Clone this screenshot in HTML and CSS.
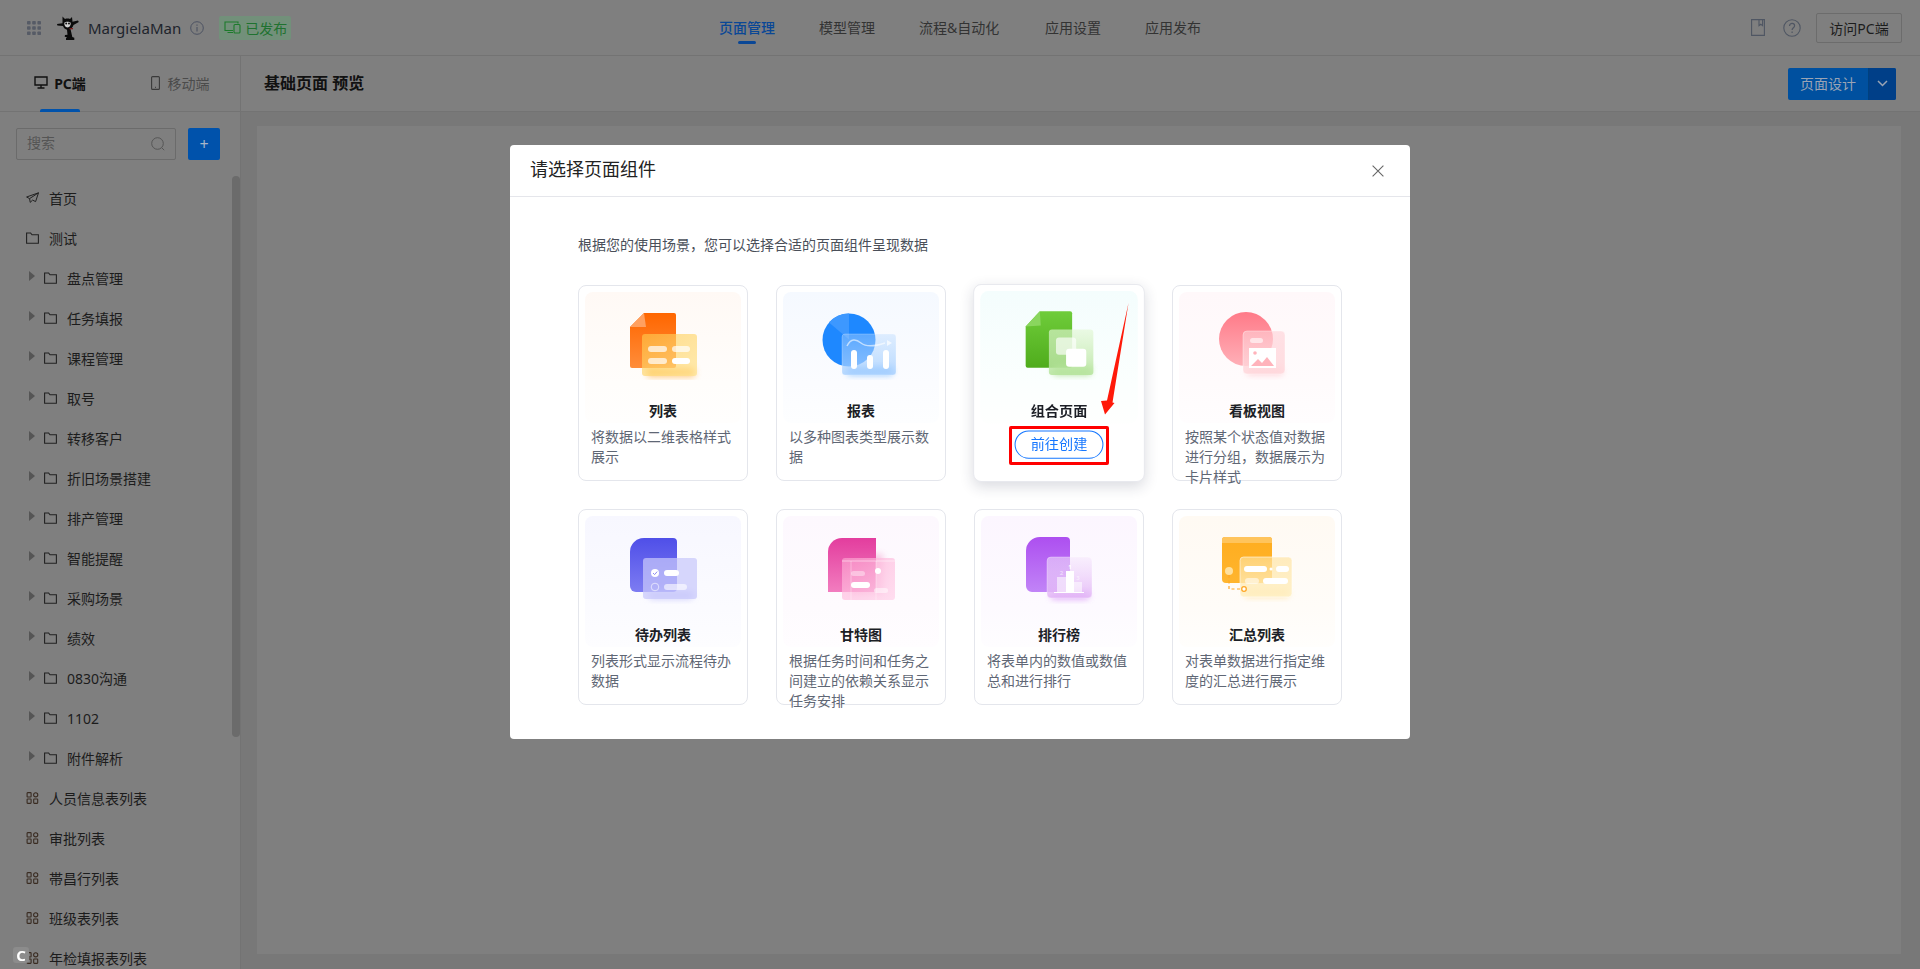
FILE: index.html
```html
<!DOCTYPE html>
<html lang="zh-CN">
<head>
<meta charset="utf-8">
<title>基础页面 预览</title>
<link rel="stylesheet" href="styles.css">
</head>
<body>
<svg class="defs" aria-hidden="true">
  <defs>
    <filter id="soft" x="-40%" y="-60%" width="180%" height="220%"><feGaussianBlur stdDeviation="3"/></filter>
    <symbol id="folder" viewBox="0 0 13 12"><path d="M.6 1h4l1.4 1.8h6.4v8.4H.6z" fill="none" stroke="#222" stroke-width="1.1"/></symbol>
    <symbol id="apps" viewBox="0 0 12 12"><g fill="none" stroke="#3a2c22" stroke-width="1.1"><rect x=".6" y=".6" width="4" height="4.4" rx=".6"/><rect x=".6" y="7" width="4" height="4.4" rx=".6"/><rect x="7.2" y="7" width="4" height="4.4" rx=".6"/><circle cx="9.2" cy="2.8" r="2.1"/></g></symbol>
    <linearGradient id="gOrange" x1="0" y1="0" x2="0" y2="1"><stop offset="0" stop-color="#ff6600"/><stop offset="1" stop-color="#ff8d3a"/></linearGradient>
    <linearGradient id="gYellow" x1="0" y1="0" x2="1" y2="1"><stop offset="0" stop-color="#ffc94a" stop-opacity=".62"/><stop offset="1" stop-color="#ffe28a" stop-opacity=".68"/></linearGradient>
    <linearGradient id="gBlueF" x1="0" y1="0" x2="0" y2="1"><stop offset="0" stop-color="#b6d8ff" stop-opacity=".4"/><stop offset="1" stop-color="#a5cfff" stop-opacity=".8"/></linearGradient>
    <linearGradient id="gGreen" x1="0" y1="0" x2="0" y2="1"><stop offset="0" stop-color="#6fcc3a"/><stop offset="1" stop-color="#4fac1c"/></linearGradient>
    <linearGradient id="gGreenF" x1="0" y1="0" x2="0" y2="1"><stop offset="0" stop-color="#e3f7d6" stop-opacity=".65"/><stop offset="1" stop-color="#b4e39a" stop-opacity=".85"/></linearGradient>
    <linearGradient id="gRed" x1="0" y1="0" x2="0" y2="1"><stop offset="0" stop-color="#ff7a88"/><stop offset="1" stop-color="#ffb0b8"/></linearGradient>
    <linearGradient id="gRedF" x1="0" y1="0" x2="0" y2="1"><stop offset="0" stop-color="#ffd0d6" stop-opacity=".6"/><stop offset="1" stop-color="#ffd8dc" stop-opacity=".85"/></linearGradient>
    <linearGradient id="gIndigo" x1="0" y1="0" x2="0" y2="1"><stop offset="0" stop-color="#4f4fe8"/><stop offset="1" stop-color="#7d7cf2"/></linearGradient>
    <linearGradient id="gPink" x1="0" y1="0" x2="0" y2="1"><stop offset="0" stop-color="#e33d9e"/><stop offset="1" stop-color="#f27dbf"/></linearGradient>
    <linearGradient id="gPinkF" x1="0" y1="0" x2="1" y2="1"><stop offset="0" stop-color="#ffa9d3" stop-opacity=".6"/><stop offset="1" stop-color="#ffd6ec" stop-opacity=".8"/></linearGradient>
    <linearGradient id="gPurple" x1="0" y1="0" x2="0" y2="1"><stop offset="0" stop-color="#ad4ff0"/><stop offset="1" stop-color="#c184f7"/></linearGradient>
    <linearGradient id="gPurpleF" x1="0" y1="0" x2="0" y2="1"><stop offset="0" stop-color="#f5e6fc" stop-opacity=".55"/><stop offset="1" stop-color="#e2b4f6" stop-opacity=".85"/></linearGradient>
    <linearGradient id="gAmber" x1="0" y1="0" x2="0" y2="1"><stop offset="0" stop-color="#ffad1f"/><stop offset="1" stop-color="#ffb52e"/></linearGradient>
    <linearGradient id="gAmberF" x1="0" y1="0" x2="0" y2="1"><stop offset="0" stop-color="#ffe3a0" stop-opacity=".65"/><stop offset="1" stop-color="#fff0c4" stop-opacity=".85"/></linearGradient>
  </defs>
</svg>

<div class="app">
  <header class="topbar">
    <div class="brand">
      <svg class="grid-icon" viewBox="0 0 14 14"><g fill="#565b66"><rect x="0" y="0" width="3.6" height="3.6" rx=".8"/><rect x="5.2" y="0" width="3.6" height="3.6" rx=".8"/><rect x="10.4" y="0" width="3.6" height="3.6" rx=".8"/><rect x="0" y="5.2" width="3.6" height="3.6" rx=".8"/><rect x="5.2" y="5.2" width="3.6" height="3.6" rx=".8"/><rect x="10.4" y="5.2" width="3.6" height="3.6" rx=".8"/><rect x="0" y="10.4" width="3.6" height="3.6" rx=".8"/><rect x="5.2" y="10.4" width="3.6" height="3.6" rx=".8"/><rect x="10.4" y="10.4" width="3.6" height="3.6" rx=".8"/></g></svg>
      <svg class="logo" viewBox="0 0 22 24"><path d="M5.500 .5L8 3c1.800-.6 3.600-.6 5 0L15 1l.5 4.800L21 4.500l.8 1.400-5.300 3C15.800 11 14.600 12.300 13.500 13l.8 3.500 1 4.500 2 .8V24H9v-1.800l1-1-2.300-.4.300-1.700 2.500-.4-.5-5C7.500 13 6.500 11.500 6 10L.4 9.500 0 8l5.500-.8z" fill="#0a0a0a"/><path d="M7.500 6.500c1.200-1 4.800-1 6 0 .7 2-.8 5-3 5s-3.700-3-3-5z" fill="#d0d0d0"/><circle cx="9.200" cy="7.400" r="1" fill="#111"/><circle cx="12" cy="7.400" r="1" fill="#111"/><rect x="12.500" y="12" width="3.500" height="1.300" fill="#7a1f1f"/></svg>
      <span class="brand-name">MargielaMan</span>
      <svg class="info-icon" viewBox="0 0 14 14"><circle cx="7" cy="7" r="6.300" fill="none" stroke="#4c5262" stroke-width="1"/><path d="M7 6v4.500M7 3.500v1.200" stroke="#4c5262" stroke-width="1.100"/></svg>
      <span class="status-tag">
        <svg class="status-icon" viewBox="0 0 17 13"><path d="M14 2.500V1H1v8.500h8M3.500 11.500H9" fill="none" stroke="#1c7a2b" stroke-width="1.100"/><rect x="10" y="3.500" width="6" height="8.500" rx="1" fill="none" stroke="#1c7a2b" stroke-width="1.100"/></svg>
        已发布
      </span>
    </div>
    <nav class="main-nav">
      <a class="nav-link is-active">页面管理</a>
      <a class="nav-link">模型管理</a>
      <a class="nav-link is-wide">流程&amp;自动化</a>
      <a class="nav-link">应用设置</a>
      <a class="nav-link">应用发布</a>
    </nav>
    <div class="top-actions">
      <svg class="book-icon" viewBox="0 0 14 17"><path d="M.6.6h12.800v15.800H.6zM8 .6v6l1.800-1.400L11.600 6.600V.6" fill="none" stroke="#4f5663" stroke-width="1.100"/></svg>
      <svg class="help-icon" viewBox="0 0 18 18"><circle cx="9" cy="9" r="8.200" fill="none" stroke="#4f5663" stroke-width="1.100"/><path d="M6.500 7c0-1.600 1.100-2.600 2.600-2.600S11.600 5.400 11.600 6.800c0 2-2.500 2-2.500 4.200M9.100 12.500v1.400" fill="none" stroke="#4f5663" stroke-width="1.200"/></svg>
      <button class="visit-btn">访问PC端</button>
    </div>
  </header>

  <div class="workspace">
    <aside class="sidebar">
      <div class="side-tabs">
        <div class="side-tab is-active">
          <svg class="tab-icon-pc" viewBox="0 0 14 13"><path d="M1 1h12v8H1zM7 9v3M3.500 12h7" fill="none" stroke="#111" stroke-width="1.400"/></svg>
          <span>PC端</span>
        </div>
        <div class="side-tab">
          <svg class="tab-icon-phone" viewBox="0 0 9 14"><rect x=".6" y=".6" width="7.800" height="12.800" rx="1" fill="none" stroke="#3a3a3a" stroke-width="1.100"/><path d="M4 11.300h1" stroke="#3a3a3a"/></svg>
          <span>移动端</span>
        </div>
      </div>
      <div class="search-row">
        <div class="search-box">
          <span class="search-text">搜索</span>
          <svg class="search-icon" viewBox="0 0 14 14"><circle cx="6.500" cy="6.500" r="5.800" fill="none" stroke="#555" stroke-width="1"/><path d="M10.800 10.800l2.400 2.400" stroke="#555"/></svg>
        </div>
        <button class="add-btn">+</button>
      </div>
      <ul class="tree">
        <li class="tree-row"><svg class="tree-icon" viewBox="0 0 13 12"><path d="M12.500.8L.6 5l3 1.600.6 3.800 2.400-2.300 3 1.500zM3.600 6.600l8.900-5.800" fill="none" stroke="#222" stroke-width="1"/></svg>首页</li>
        <li class="tree-row"><svg class="tree-icon"><use href="#folder"/></svg>测试</li>
        <li class="tree-row is-nested"><i class="caret"></i><svg class="tree-icon"><use href="#folder"/></svg>盘点管理</li>
        <li class="tree-row is-nested"><i class="caret"></i><svg class="tree-icon"><use href="#folder"/></svg>任务填报</li>
        <li class="tree-row is-nested"><i class="caret"></i><svg class="tree-icon"><use href="#folder"/></svg>课程管理</li>
        <li class="tree-row is-nested"><i class="caret"></i><svg class="tree-icon"><use href="#folder"/></svg>取号</li>
        <li class="tree-row is-nested"><i class="caret"></i><svg class="tree-icon"><use href="#folder"/></svg>转移客户</li>
        <li class="tree-row is-nested"><i class="caret"></i><svg class="tree-icon"><use href="#folder"/></svg>折旧场景搭建</li>
        <li class="tree-row is-nested"><i class="caret"></i><svg class="tree-icon"><use href="#folder"/></svg>排产管理</li>
        <li class="tree-row is-nested"><i class="caret"></i><svg class="tree-icon"><use href="#folder"/></svg>智能提醒</li>
        <li class="tree-row is-nested"><i class="caret"></i><svg class="tree-icon"><use href="#folder"/></svg>采购场景</li>
        <li class="tree-row is-nested"><i class="caret"></i><svg class="tree-icon"><use href="#folder"/></svg>绩效</li>
        <li class="tree-row is-nested"><i class="caret"></i><svg class="tree-icon"><use href="#folder"/></svg>0830沟通</li>
        <li class="tree-row is-nested"><i class="caret"></i><svg class="tree-icon"><use href="#folder"/></svg>1102</li>
        <li class="tree-row is-nested"><i class="caret"></i><svg class="tree-icon"><use href="#folder"/></svg>附件解析</li>
        <li class="tree-row"><svg class="tree-icon"><use href="#apps"/></svg>人员信息表列表</li>
        <li class="tree-row"><svg class="tree-icon"><use href="#apps"/></svg>审批列表</li>
        <li class="tree-row"><svg class="tree-icon"><use href="#apps"/></svg>帯昌行列表</li>
        <li class="tree-row"><svg class="tree-icon"><use href="#apps"/></svg>班级表列表</li>
        <li class="tree-row"><svg class="tree-icon"><use href="#apps"/></svg>年检填报表列表</li>
      </ul>
      <div class="side-scroll"></div>
    </aside>
    <main class="content">
      <div class="content-head">
        <h1 class="content-title">基础页面 预览</h1>
        <div class="split-btn">
          <span class="split-main">页面设计</span>
          <span class="split-arrow"><svg class="chevron" viewBox="0 0 11 7"><path d="M1 1l4.500 4.500L10 1" fill="none" stroke="#9aa4b4" stroke-width="1.500"/></svg></span>
        </div>
      </div>
      <div class="content-body"><div class="canvas"></div></div>
    </main>
  </div>
</div>

<div class="scrim">
  <section class="modal">
    <header class="modal-head">
      <h2 class="modal-title">请选择页面组件</h2>
      <svg class="close-icon" viewBox="0 0 12 12"><path d="M.6.6l10.800 10.800M11.400.6L.6 11.400" stroke="#666" stroke-width="1.100"/></svg>
    </header>
    <div class="modal-body">
      <p class="modal-sub">根据您的使用场景，您可以选择合适的页面组件呈现数据</p>
      <div class="tile-grid">

        <article class="tile">
          <div class="tile-art tint-orange">
            <svg class="art" viewBox="0 0 80 70">
              <path d="M21 3h30a2 2 0 0 1 2 2v51a2 2 0 0 1-2 2H9a2 2 0 0 1-2-2V17z" fill="url(#gOrange)"/>
              <path d="M21 3l2 14H7z" fill="#ffa060"/>
              <rect x="24" y="58" width="48" height="9" rx="3" fill="#ffb347" opacity=".7" filter="url(#soft)"/>
              <rect x="19" y="24" width="55" height="42" rx="3" fill="url(#gYellow)"/>
              <g fill="#fff"><rect x="25" y="36" width="19" height="6" rx="3" opacity=".7"/><rect x="49" y="36" width="18" height="6" rx="3" opacity=".7"/><rect x="25" y="48" width="19" height="6" rx="3" opacity=".7"/><rect x="49" y="48" width="18" height="6" rx="3"/></g>
            </svg>
            <h3 class="tile-title">列表</h3>
          </div>
          <p class="tile-desc">将数据以二维表格样式展示</p>
        </article>

        <article class="tile">
          <div class="tile-art tint-blue">
            <svg class="art" viewBox="0 0 80 70">
              <circle cx="28" cy="30" r="26.500" fill="#1e88ff"/>
              <path d="M28 3.500a26.500 26.500 0 0 0-20 9l20 17z" fill="#3d98ff"/>
              <rect x="26" y="57" width="46" height="8" rx="3" fill="#5aa8ff" opacity=".65" filter="url(#soft)"/>
              <rect x="21" y="24" width="54" height="41" rx="3" fill="url(#gBlueF)" stroke="#fff" stroke-opacity=".4" stroke-width=".6"/>
              <path d="M26 36c4-8 9-7 14-3s12 4 24 0" fill="none" stroke="#fff" stroke-opacity=".6" stroke-width="1.500"/>
              <path d="M66 30l5 3-5 3z" fill="#fff" fill-opacity=".7"/>
              <g fill="#fff"><rect x="30" y="40" width="6" height="19" rx="3"/><rect x="46" y="45" width="6" height="14" rx="3"/><rect x="62" y="40" width="6" height="19" rx="3"/></g>
            </svg>
            <h3 class="tile-title">报表</h3>
          </div>
          <p class="tile-desc">以多种图表类型展示数据</p>
        </article>

        <article class="tile is-hover">
          <div class="tile-art tint-green">
            <svg class="art" viewBox="0 0 80 70">
              <path d="M21 2h30a2 2 0 0 1 2 2v52a2 2 0 0 1-2 2H9a2 2 0 0 1-2-2V17z" fill="url(#gGreen)"/>
              <path d="M21 2l1 14-15 1z" fill="#8ad65e"/>
              <rect x="34" y="56" width="38" height="9" rx="3" fill="#9ed87a" opacity=".75" filter="url(#soft)"/>
              <rect x="30" y="20" width="44" height="45" rx="3" fill="url(#gGreenF)"/>
              <rect x="37" y="28" width="20" height="17" rx="3" fill="#fff" opacity=".65"/>
              <rect x="47" y="39" width="20" height="18" rx="3" fill="#fff"/>
            </svg>
            <h3 class="tile-title">组合页面</h3>
          </div>
          <button class="create-btn">前往创建</button>
        </article>

        <article class="tile">
          <div class="tile-art tint-rose">
            <svg class="art" viewBox="0 0 80 70">
              <circle cx="29" cy="29" r="27" fill="url(#gRed)"/>
              <rect x="30" y="58" width="36" height="7" rx="3" fill="#ffb0ba" opacity=".55" filter="url(#soft)"/>
              <rect x="26" y="21" width="42" height="43" rx="4" fill="url(#gRedF)" stroke="#fff" stroke-opacity=".6" stroke-width=".6"/>
              <rect x="33" y="28" width="13" height="5" rx="2.500" fill="#fff" opacity=".6"/>
              <rect x="32" y="38" width="27" height="20" fill="#fff"/>
              <circle cx="38" cy="43" r="1.800" fill="#ffb3bb"/>
              <path d="M34 56l7-7 4 4 5-6 7 9z" fill="#ffb3bb"/>
            </svg>
            <h3 class="tile-title">看板视图</h3>
          </div>
          <p class="tile-desc">按照某个状态值对数据进行分组，数据展示为卡片样式</p>
        </article>

        <article class="tile">
          <div class="tile-art tint-indigo">
            <svg class="art" viewBox="0 0 80 70">
              <path d="M21 4h29a4 4 0 0 1 4 4v46a4 4 0 0 1-4 4H13a6 6 0 0 1-6-6V18a14 14 0 0 1 14-14z" fill="url(#gIndigo)"/>
              <rect x="26" y="58" width="44" height="7" rx="3" fill="#b6b5f8" opacity=".65" filter="url(#soft)"/>
              <rect x="20" y="24" width="54" height="41" rx="3" fill="#c8c7fb" fill-opacity=".72"/>
              <circle cx="32" cy="39" r="4" fill="#fff"/>
              <path d="M30 39l1.600 1.600 2.600-3" fill="none" stroke="#8d8cf2" stroke-width="1"/>
              <rect x="41" y="36" width="15" height="6" rx="3" fill="#fff"/>
              <circle cx="32" cy="53" r="3.800" fill="none" stroke="#fff" stroke-opacity=".6"/>
              <rect x="41" y="50" width="23" height="6" rx="3" fill="#fff" opacity=".6"/>
            </svg>
            <h3 class="tile-title">待办列表</h3>
          </div>
          <p class="tile-desc">列表形式显示流程待办数据</p>
        </article>

        <article class="tile">
          <div class="tile-art tint-pink">
            <svg class="art" viewBox="0 0 80 70">
              <path d="M21 4h34v54H7V18A14 14 0 0 1 21 4z" fill="url(#gPink)"/>
              <rect x="30" y="20" width="32" height="40" fill="#e85aa8" opacity=".3" filter="url(#soft)"/>
              <rect x="21" y="24" width="53" height="42" rx="3" fill="url(#gPinkF)"/>
              <path d="M21 27h53" stroke="#fff" stroke-opacity=".5"/>
              <path d="M30 27v39M55 27v39" stroke="#fff" stroke-opacity=".35"/>
              <rect x="30" y="37" width="14" height="5" rx="2.500" fill="#fff" opacity=".4"/>
              <rect x="30" y="48" width="19" height="6" rx="3" fill="#fff"/>
              <circle cx="57" cy="37" r="3" fill="#fff"/>
              <rect x="53" y="54" width="14" height="5" rx="2.500" fill="#fff" opacity=".5"/>
            </svg>
            <h3 class="tile-title">甘特图</h3>
          </div>
          <p class="tile-desc">根据任务时间和任务之间建立的依赖关系显示任务安排</p>
        </article>

        <article class="tile">
          <div class="tile-art tint-purple">
            <svg class="art" viewBox="0 0 80 70">
              <path d="M21 3h26a4 4 0 0 1 4 4v47a4 4 0 0 1-4 4H13a6 6 0 0 1-6-6V17A14 14 0 0 1 21 3z" fill="url(#gPurple)"/>
              <rect x="32" y="58" width="38" height="7" rx="3" fill="#d48df5" opacity=".8" filter="url(#soft)"/>
              <rect x="28" y="23" width="45" height="41" rx="4" fill="url(#gPurpleF)" stroke="#fff" stroke-opacity=".5" stroke-width=".6"/>
              <rect x="38" y="43" width="9" height="15" fill="#fff" opacity=".55"/>
              <rect x="47" y="37" width="8" height="21" fill="#fff"/>
              <rect x="55" y="48" width="8" height="10" fill="#fff" opacity=".55"/>
              <path d="M35 58.500h30" stroke="#fff"/>
              <text class="rank-num" x="51" y="35" text-anchor="middle">1</text>
              <text class="rank-num is-faint" x="42.500" y="41" text-anchor="middle">2</text>
              <text class="rank-num is-faint" x="59" y="46" text-anchor="middle">3</text>
            </svg>
            <h3 class="tile-title">排行榜</h3>
          </div>
          <p class="tile-desc">将表单内的数值或数值总和进行排行</p>
        </article>

        <article class="tile">
          <div class="tile-art tint-amber">
            <svg class="art" viewBox="0 0 80 70">
              <path d="M8 3h44a3 3 0 0 1 3 3v39a4 4 0 0 1-4 4H9a4 4 0 0 1-4-4V6a3 3 0 0 1 3-3z" fill="url(#gAmber)"/>
              <path d="M8 3h44a3 3 0 0 1 3 3v3H5V6a3 3 0 0 1 3-3z" fill="#ffc45c"/>
              <rect x="28" y="56" width="44" height="7" rx="3" fill="#ffd67f" opacity=".65" filter="url(#soft)"/>
              <rect x="23" y="23" width="52" height="40" rx="3.500" fill="url(#gAmberF)" stroke="#fff" stroke-opacity=".8" stroke-width=".7"/>
              <circle cx="12" cy="37" r="4" fill="#ffe09c"/>
              <path d="M12 41v14h11" fill="none" stroke="#ffa726" stroke-width="1.200" stroke-dasharray="3 2.500"/>
              <circle cx="27" cy="55" r="2.300" fill="#fff" stroke="#ffa726" stroke-width="1.300"/>
              <g fill="#fff"><rect x="27" y="32" width="23" height="6" rx="3"/><circle cx="54" cy="35" r="1.500"/><rect x="59" y="32" width="13" height="6" rx="3"/><rect x="28" y="44" width="14" height="6" rx="3" opacity=".55"/><rect x="46" y="44" width="25" height="6" rx="3"/></g>
            </svg>
            <h3 class="tile-title">汇总列表</h3>
          </div>
          <p class="tile-desc">对表单数据进行指定维度的汇总进行展示</p>
        </article>

      </div>
    </div>
    <div class="mark-box"></div>
    <svg class="mark-arrow" viewBox="0 0 40 125"><path d="M33.500 8L17.500 107.500 19.500 108 10 119.500 6 106 12 105.500z" fill="#ff1a0a"/></svg>
  </section>
</div>

<span class="corner-badge">C</span>
</body>
</html>
```

FILE: styles.css
```css
* { box-sizing: border-box; }
html, body { margin: 0; height: 100%; overflow: hidden; }
body {
  font-family: "Noto Sans", "Noto Sans CJK SC", sans-serif;
  font-size: 14px;
  color: #1c1c1c;
  background: #7f7f7f;
}
h1, h2, h3, p, ul { margin: 0; padding: 0; }
button { font: inherit; cursor: pointer; }
.defs { position: absolute; width: 0; height: 0; }

.app { display: flex; flex-direction: column; height: 100vh; overflow: hidden; }

/* top bar */
.topbar {
  flex: 0 0 56px;
  display: grid;
  grid-template-columns: 1fr auto 1fr;
  align-items: center;
  border-bottom: 1px solid #737373;
}
.brand { display: flex; align-items: center; padding-left: 27px; }
.grid-icon { width: 14px; height: 14px; }
.logo { width: 22px; height: 24px; margin-left: 16px; }
.brand-name { margin-left: 9px; font-size: 15px; color: #20242c; line-height: 20px; }
.info-icon { width: 14px; height: 14px; margin-left: 9px; }
.status-tag {
  display: flex;
  align-items: center;
  gap: 4px;
  width: 72px;
  height: 24px;
  margin-left: 15px;
  padding-left: 5px;
  background: #72907a;
  color: #1f7230;
  border-radius: 2px;
}
.status-icon { width: 17px; height: 13px; }

.main-nav { display: flex; gap: 44px; }
.nav-link { position: relative; line-height: 20px; color: #333; white-space: nowrap; }
.nav-link.is-wide { min-width: 82px; }
.nav-link.is-active { color: #0a4796; font-weight: 500; }
.nav-link.is-active::after {
  content: "";
  position: absolute;
  left: 19px;
  bottom: -6px;
  width: 18px;
  height: 3px;
  border-radius: 2px;
  background: #0a4796;
}

.top-actions { display: flex; align-items: center; justify-content: flex-end; padding-right: 18px; }
.book-icon { width: 14px; height: 17px; }
.help-icon { width: 18px; height: 18px; margin-left: 18px; }
.visit-btn {
  width: 86px;
  height: 30px;
  margin-left: 15px;
  padding: 0;
  background: transparent;
  border: 1px solid #6c6c6c;
  border-radius: 2px;
  color: #1c1c1c;
  white-space: nowrap;
}

/* workspace */
.workspace { flex: 1; display: flex; min-height: 0; }
.sidebar {
  position: relative;
  flex: 0 0 241px;
  display: flex;
  flex-direction: column;
  border-right: 1px solid #737373;
  overflow: hidden;
}
.side-tabs { flex: 0 0 56px; display: grid; grid-template-columns: 120px 120px; border-bottom: 1px solid #737373; }
.side-tab { position: relative; display: flex; align-items: center; justify-content: center; gap: 6px; padding-bottom: 2px; color: #4b4b4b; }
.side-tab.is-active { color: #111; font-weight: 700; }
.side-tab.is-active::after {
  content: "";
  position: absolute;
  left: 40px;
  bottom: -1px;
  width: 40px;
  height: 3px;
  background: #0052ab;
  border-radius: 2px 2px 0 0;
}
.tab-icon-pc { width: 14px; height: 13px; }
.tab-icon-phone { width: 9px; height: 14px; margin-right: 2px; }

.search-row { display: flex; gap: 12px; padding: 16px 20px 0 16px; }
.search-box {
  display: flex;
  align-items: center;
  justify-content: space-between;
  width: 160px;
  height: 32px;
  padding: 0 10px;
  border: 1px solid #6b6b6b;
  border-radius: 2px;
}
.search-text { color: #555; line-height: 18px; margin-bottom: 2px; }
.search-icon { width: 14px; height: 14px; }
.add-btn {
  width: 32px;
  height: 32px;
  padding: 0;
  border: 0;
  border-radius: 2px;
  background: #0052ab;
  color: #a8b6c8;
  font-size: 16px;
  line-height: 30px;
}

.tree { list-style: none; margin-top: 18px; }
.tree-row { display: flex; align-items: center; height: 40px; padding-left: 26px; color: #1c1c1c; white-space: nowrap; }
.tree-icon { flex: 0 0 13px; width: 13px; height: 12px; margin-right: 10px; }
.tree-row.is-nested { padding-left: 29px; }
.caret {
  flex: 0 0 6px;
  width: 0;
  height: 0;
  margin: -4px 9px 0 0;
  border-style: solid;
  border-width: 5px 0 5px 6px;
  border-color: transparent transparent transparent #555;
}
.side-scroll {
  position: absolute;
  left: 232px;
  top: 120px;
  width: 8px;
  height: 561px;
  border-radius: 4px;
  background: #6b6b6b;
}

.content { flex: 1; display: flex; flex-direction: column; min-width: 0; }
.content-head {
  flex: 0 0 56px;
  display: flex;
  align-items: center;
  justify-content: space-between;
  padding: 0 24px 0 23px;
  border-bottom: 1px solid #737373;
}
.content-title { font-size: 16px; font-weight: 700; color: #111; line-height: 22px; margin-bottom: 2px; }
.split-btn { display: flex; height: 32px; border-radius: 2px; overflow: hidden; background: #00509f; color: #9aa4b4; }
.split-main { width: 80px; line-height: 32px; text-align: center; }
.split-arrow { display: flex; align-items: center; justify-content: center; width: 28px; background: #003f88; border-left: 1px solid #00417f; }
.chevron { width: 11px; height: 7px; }
.content-body { flex: 1; padding: 14px 19px 15px 16px; background: #787878; }
.canvas { height: 100%; background: #7f7f7f; }

/* dialog */
.scrim { position: fixed; inset: 0; display: flex; justify-content: center; align-items: flex-start; padding-top: 145px; }
.modal { position: relative; width: 900px; height: 594px; background: #fff; border-radius: 4px; color: #222; }
.modal-head {
  display: flex;
  align-items: center;
  justify-content: space-between;
  height: 52px;
  padding: 0 26px 0 20px;
  border-bottom: 1px solid #e5e6eb;
}
.modal-title { font-size: 18px; font-weight: 400; color: #222; line-height: 24px; margin-bottom: 3px; }
.close-icon { width: 12px; height: 12px; }
.modal-body { padding: 38px 68px 0; }
.modal-sub { line-height: 20px; color: #4a4f59; font-size: 14px; }
.tile-grid { display: grid; grid-template-columns: repeat(4, 170px); grid-auto-rows: 196px; gap: 28px; margin-top: 30px; }
.tile { height: 196px; padding: 6px; background: #fff; border: 1px solid #e4e6ec; border-radius: 8px; }
.tile.is-hover { transform: scale(1.01); box-shadow: 0 4px 14px rgba(30, 40, 70, .16); display: flex; flex-direction: column; align-items: center; border-color: #e8e9ee; }
.tile-art { width: 156px; height: 131px; padding-top: 18px; border-radius: 8px; }
.art { display: block; width: 80px; height: 70px; margin: 0 auto; }
.rank-num { font: 700 6px "Noto Sans", sans-serif; fill: #fff; }
.rank-num.is-faint { fill-opacity: .5; }
.tile-title { margin-top: 21px; font-size: 14px; font-weight: 700; line-height: 20px; text-align: center; color: #1c1f26; }
.tile-desc { margin-top: 4px; padding: 0 6px; line-height: 20px; color: #5f6775; font-size: 14px; }
.tint-orange { background: linear-gradient(#fff9f5, #fffdfb 70%, #fffefd); }
.tint-blue { background: linear-gradient(#f5f9ff, #fbfcff 70%, #fdfeff); }
.tint-green { background: linear-gradient(#f4fdfd, #fbfffe 70%, #fefffe); }
.tint-rose { background: linear-gradient(#fff8fa, #fffbfc 70%, #fffdfe); }
.tint-indigo { background: linear-gradient(#f7f7ff, #fbfbff 70%, #fdfdff); }
.tint-pink { background: linear-gradient(#fdf8fe, #fefbfe 70%, #fffdff); }
.tint-purple { background: linear-gradient(#fcf6ff, #fdfaff 70%, #fefdff); }
.tint-amber { background: linear-gradient(#fffaf3, #fffcf8 70%, #fffefc); }
.create-btn {
  width: 88px;
  height: 28px;
  margin-top: 7px;
  padding: 0 0 2px;
  background: #fff;
  border: 1px solid #1677ff;
  border-radius: 14px;
  color: #1677ff;
  line-height: 22px;
  white-space: nowrap;
}

.mark-box { position: absolute; left: 499px; top: 281px; width: 100px; height: 39px; border: 3px solid #f00; border-radius: 2px; }
.mark-arrow { position: absolute; left: 585px; top: 150px; width: 40px; height: 125px; }
.corner-badge {
  position: fixed;
  left: 13px;
  top: 947px;
  width: 16px;
  height: 16px;
  border-radius: 3px;
  background: #8c8c8c;
  color: #fff;
  font: 700 15px/16px "Noto Sans", sans-serif;
  text-align: center;
}
```
